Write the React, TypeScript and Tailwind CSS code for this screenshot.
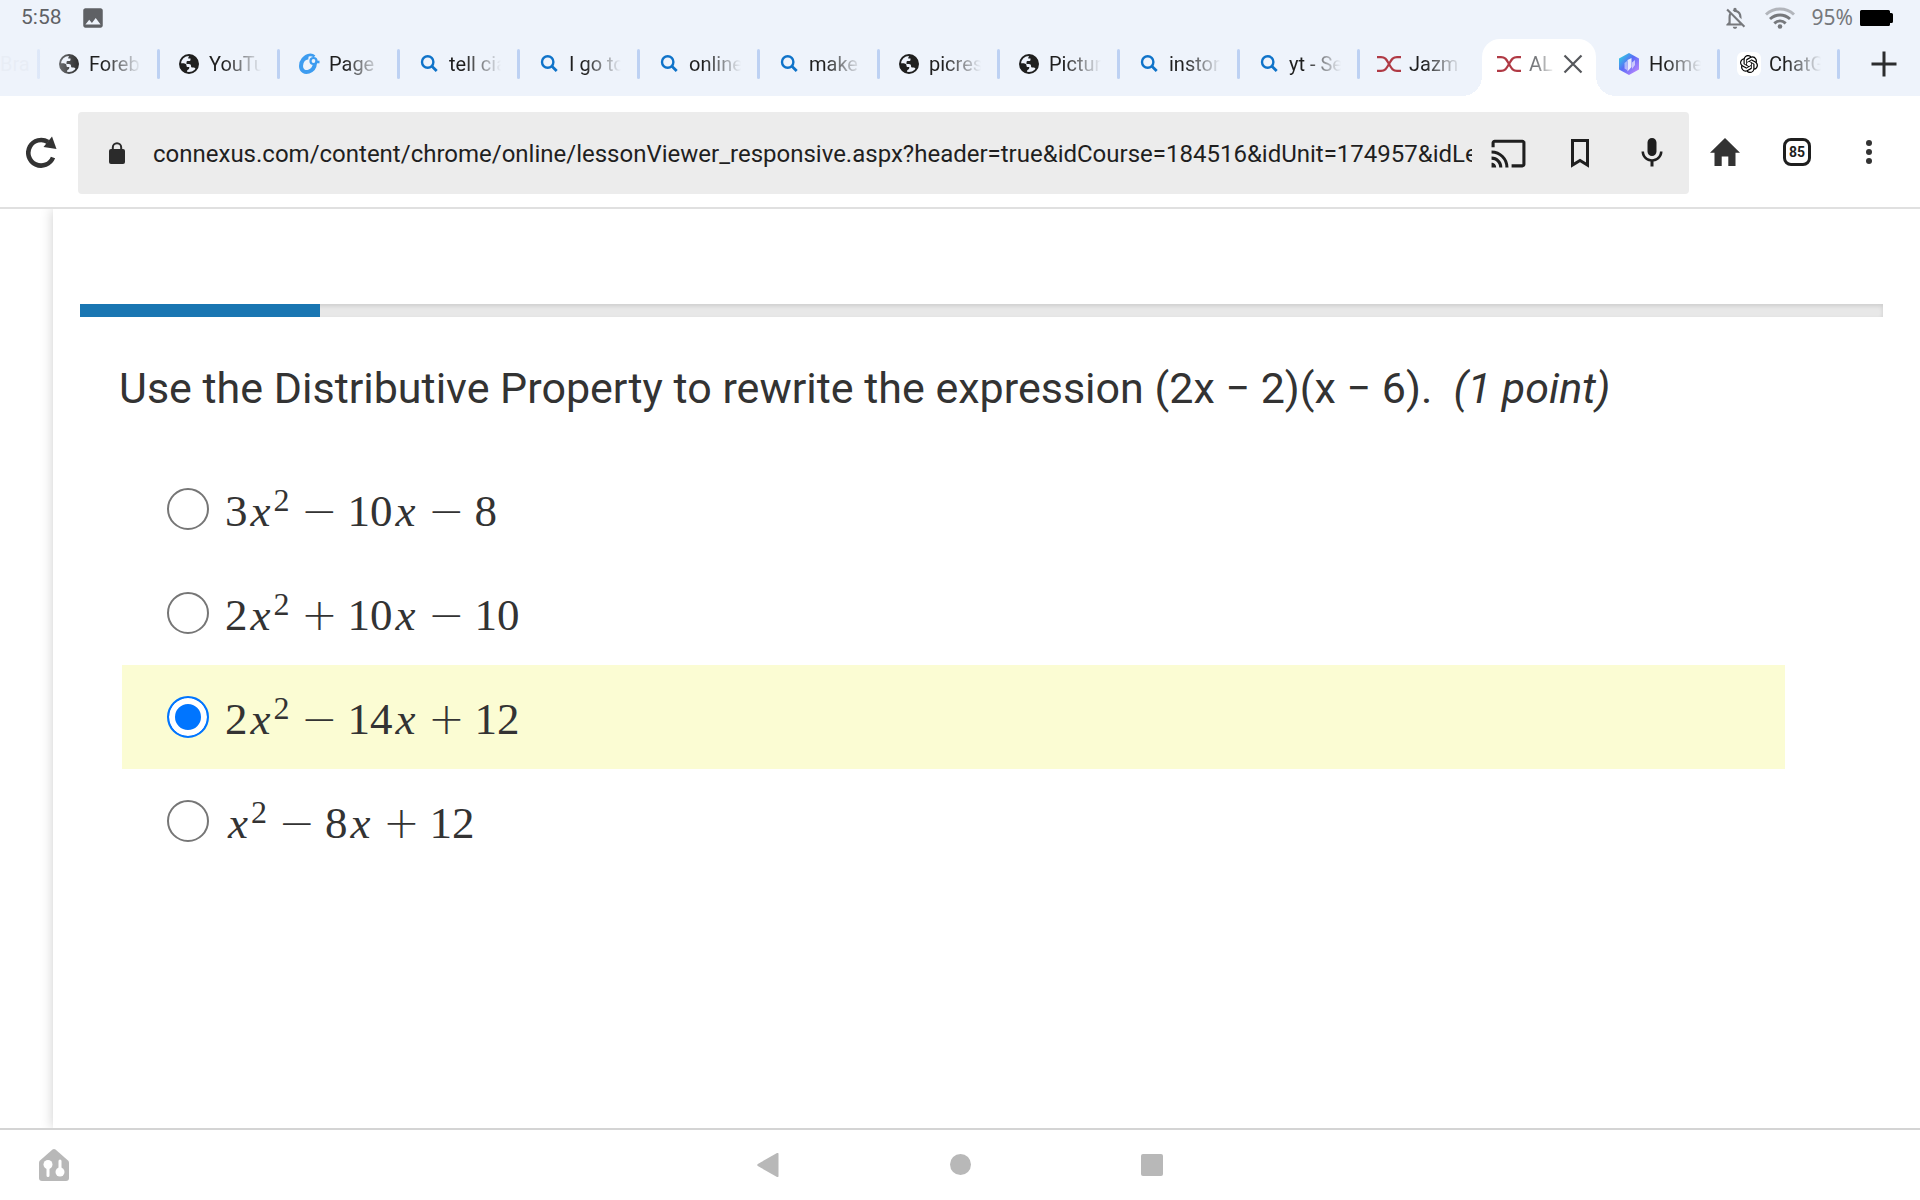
import React, { useState } from "react";
import {
  MdCast,
  MdImage,
  MdMic,
  MdOutlineNotificationsOff,
} from "react-icons/md";
import { SiOpenai } from "react-icons/si";

const GlobeIcon = () => (
  <svg viewBox="0 0 24 24" className="size-6 text-[#1f1f1f]" fill="none">
    <circle cx="12" cy="12" r="9" stroke="currentColor" strokeWidth="2" />
    <path
      fill="currentColor"
      d="M13.500 3c4 .6 7.500 4 7.500 8.500 0 2-.8 4-2 5.500-.8-1.200-2-1.300-3.300-1.400-1.200 0-1.700-.7-1.700-1.700 0-1.200-.8-1.900-2-1.900H9.500v-1.700c0-.8.500-1.300 1.300-1.300h1.400c.8 0 1.300-.5 1.300-1.300V6.500h-2.300C11.200 5 12 3.600 13.500 3z"
    />
    <path
      fill="currentColor"
      d="M3.200 11.500c1.800-.3 3.600-.3 5 .2 1 .4 1.300 1.100 1.300 2 0 .9.500 1.400 1.400 1.400h1.400c0 1.300-.3 2.200-1.300 2.600-.8.3-1.100 1-1.100 3.200-4-1-6.900-4.700-6.700-9.400z"
    />
  </svg>
);

const SearchIcon = () => (
  <svg viewBox="0 0 24 24" className="size-6" fill="none" stroke="#0f73c9">
    <circle cx="10.700" cy="10" r="5.700" strokeWidth="2.400" />
    <path d="M14.900 14.200l4.800 4.800" strokeWidth="2.800" />
  </svg>
);

const PageIcon = () => (
  <svg viewBox="0 0 24 24" className="size-6" fill="none" stroke="#3d9cf0">
    <path
      d="M11.500 5.500C7.500 5 4 9 4 14c0 5 4 6.800 7.800 5.600 3.700-1.200 6-4.600 6.200-8.600"
      strokeWidth="4"
    />
    <path d="M5.500 8C8 3 14 1.500 17.500 4.500" strokeWidth="2.600" />
    <circle cx="16.500" cy="9" r="3" strokeWidth="2.200" />
    <path d="M18.500 10h4" strokeWidth="2.600" />
  </svg>
);

const ConnexusIcon = () => (
  <svg viewBox="0 0 24 24" className="size-6" fill="none" stroke="#b03a45">
    <path d="M0 5.200h4c4.500 0 5.500 2.600 8 6.800 2.500 4.200 3.500 6.800 8 6.800h4" strokeWidth="2.200" />
    <path d="M0 18.800h4c4.500 0 5.500-2.600 8-6.800 2.500-4.200 3.500-6.800 8-6.800h4" strokeWidth="2.200" />
  </svg>
);

const HomeTabIcon = () => (
  <svg viewBox="0 0 24 24" className="size-6">
    <defs>
      <linearGradient id="hex" x1="0" y1="0" x2="1" y2="1">
        <stop offset="0" stopColor="#22e5dc" />
        <stop offset="0.450" stopColor="#5a6cf7" />
        <stop offset="1" stopColor="#d08bff" />
      </linearGradient>
    </defs>
    <path d="M12 1l10 5.500v11L12 23 2 17.500v-11z" fill="url(#hex)" />
    <path d="M7.500 11l2.500-2v9l-2.500-1.500z" fill="#fff" opacity="0.500" />
    <path d="M10.500 8l4-2v9l-4 4.500z" fill="#fff" opacity="0.850" />
    <path d="M15 10.500l3-2.500v5l-3 4z" fill="#fff" opacity="0.600" />
  </svg>
);

const ChatIcon = () => (
  <span className="flex size-6 items-center justify-center rounded-md bg-white text-black">
    <SiOpenai size={18} />
  </span>
);

const tabs = [
  { title: "Foreb", Icon: GlobeIcon },
  { title: "YouTu", Icon: GlobeIcon },
  { title: "Page", Icon: PageIcon },
  { title: "tell cia", Icon: SearchIcon },
  { title: "I go to", Icon: SearchIcon },
  { title: "online", Icon: SearchIcon },
  { title: "make", Icon: SearchIcon },
  { title: "picres", Icon: GlobeIcon },
  { title: "Pictur", Icon: GlobeIcon },
  { title: "instor", Icon: SearchIcon },
  { title: "yt - Se", Icon: SearchIcon },
  { title: "Jazm", Icon: ConnexusIcon },
  { title: "AL", Icon: ConnexusIcon, active: true },
  { title: "Home", Icon: HomeTabIcon, noLine: true },
  { title: "ChatG", Icon: ChatIcon },
];

const answers = [
  ["3", "x2", "−", "10", "x", "−", "8"],
  ["2", "x2", "+", "10", "x", "−", "10"],
  ["2", "x2", "−", "14", "x", "+", "12"],
  ["x2", "−", "8", "x", "+", "12"],
];

const MathText = ({ parts }: { parts: string[] }) => (
  <span className="flex items-baseline pt-[3px] font-['Liberation_Serif',serif] text-[45px] leading-[52px]">
    {parts.map((part, i) => {
      if (part === "+" || part === "−") {
        return (
          <span
            key={i}
            className="w-14 text-center font-['DejaVu_Sans',sans-serif] text-[44px] leading-[52px] font-extralight"
          >
            {part}
          </span>
        );
      }
      if (part[0] === "x") {
        return (
          <span key={i} className="flex items-baseline">
            <i className="w-[26px] text-center">x</i>
            {part[1] && (
              <sup className="top-0 mr-[2px] self-start text-[32px] leading-[30px]">
                {part[1]}
              </sup>
            )}
          </span>
        );
      }
      return <span key={i}>{part}</span>;
    })}
  </span>
);

const StatusBar = () => (
  <div className="flex h-9 items-center justify-between pr-[27px] pl-[21px]">
    <div className="flex items-center gap-[18px] text-[21px] text-[#5f6165]">
      <span>5:58</span>
      <MdImage size={26} />
    </div>
    <div className="flex items-center gap-[7px] text-[#76787c]">
      <div className="flex items-center gap-[17px]">
        <MdOutlineNotificationsOff size={26} />
        <svg viewBox="0 0 30 22" className="h-[22px] w-[30px]" fill="none" stroke="currentColor" strokeWidth="3">
          <path d="M1 7.500C9 .2 21 .2 29 7.500" opacity="0.500" />
          <path d="M5 12c6-5.300 14-5.300 20 0" />
          <path d="M9.300 16.300c3.400-3 8-3 11.400 0" />
          <circle cx="15" cy="19.500" r="2.300" fill="currentColor" stroke="none" />
        </svg>
        <span className="font-['Noto_Sans',sans-serif] text-[21px]">95%</span>
      </div>
      <svg viewBox="0 0 33 16" className="h-4 w-[33px]">
        <path d="M1.500 0h27q1.500 0 1.500 1.500V3h1.500Q33 3 33 4.500v7q0 1.500-1.500 1.500H30v1.500q0 1.500-1.500 1.500h-27Q0 16 0 14.500v-13Q0 0 1.500 0z" />
      </svg>
    </div>
  </div>
);

const TabStrip = () => (
  <div className="relative flex h-[60px] overflow-hidden pb-1">
    <div className="flex w-[37px] shrink-0 items-center text-xl text-[#dfe4ec]">Bra</div>
    {tabs.map(({ title, Icon, active, noLine }) => (
      <div key={title} className="relative flex w-[120px] shrink-0 items-center">
        {active && (
          <div className="absolute top-[3px] right-px -bottom-1 left-[5px] rounded-t-[18px] bg-white">
            <div className="absolute bottom-0 -left-5 size-5 bg-[radial-gradient(circle_at_top_left,transparent_20px,white_20px)]" />
            <div className="absolute -right-5 bottom-0 size-5 bg-[radial-gradient(circle_at_top_right,transparent_20px,white_20px)]" />
          </div>
        )}
        <span
          className={
            active || noLine ? "w-[3px]" : "h-[30px] w-[3px] rounded-xs bg-[#bdd1f3]"
          }
        />
        <button className="relative flex items-center gap-2 pl-[17px] text-xl text-[#1f1f1f]">
          <Icon />
          <span
            className={
              active
                ? "w-[26px] overflow-hidden text-left whitespace-nowrap text-[#77797c] mask-r-from-30% mask-r-to-100%"
                : "w-[52px] overflow-hidden text-left whitespace-nowrap mask-r-from-30% mask-r-to-100%"
            }
          >
            {title}
          </span>
        </button>
        {active && (
          <button aria-label="Close tab" className="relative ml-2">
            <svg viewBox="0 0 20 20" className="size-5" stroke="#55575b" strokeWidth="2.200">
              <path d="M1.500 1.500l17 17M18.500 1.500l-17 17" />
            </svg>
          </button>
        )}
      </div>
    ))}
    <span className="h-[30px] w-[3px] shrink-0 self-center rounded-xs bg-[#bdd1f3]" />
    <button aria-label="New tab" className="flex grow items-center justify-center pl-2">
      <svg viewBox="0 0 26 26" className="size-[26px]" stroke="#2b2c2e" strokeWidth="3">
        <path d="M13 .5v25M.5 13h25" />
      </svg>
    </button>
    <div className="pointer-events-none absolute inset-y-0 left-0 w-9 bg-[#eef3fb]/60" />
    <div className="pointer-events-none absolute inset-y-0 left-9 w-12 bg-linear-to-r from-[#eef3fb]/70 to-transparent" />
  </div>
);

const Toolbar = () => (
  <div className="flex items-center border-b-2 border-[#e0e0e0] bg-white pt-4 pr-[15px] pb-[13px] text-[#1f1f1f]">
    <button aria-label="Reload" className="flex w-[78px] justify-center pb-[2px] pl-[6px]">
      <svg viewBox="0 0 32 32" className="size-8" fill="none">
        <path d="M27 21.500A12.800 12.800 0 1 1 22 6" stroke="#333" strokeWidth="4.600" />
        <path d="M26 .5L30.500 13 17.500 11z" fill="#333" />
      </svg>
    </button>
    <div className="flex h-[82px] min-w-0 grow items-center rounded-sm bg-[#ececec] pr-px pl-[31px]">
      <svg viewBox="0 0 16 22" className="mr-7 h-[22px] w-4 shrink-0" fill="none">
        <path d="M3.800 9V5.500a4.200 4.200 0 0 1 8.400 0V9" stroke="#2b2b2b" strokeWidth="2" />
        <rect y="7" width="16" height="15" rx="2" fill="#2b2b2b" />
      </svg>
      <input
        aria-label="Address"
        className="min-w-0 grow bg-transparent pt-[2px] text-2xl outline-none"
        defaultValue="connexus.com/content/chrome/online/lessonViewer_responsive.aspx?header=true&idCourse=184516&idUnit=174957&idLesson="
      />
      <button aria-label="Cast" className="flex w-[72px] shrink-0 justify-center">
        <MdCast size={37} />
      </button>
      <button aria-label="Bookmark" className="flex w-[72px] shrink-0 justify-center">
        <svg viewBox="0 0 18 29" className="h-[29px] w-[18px]" fill="none" stroke="currentColor" strokeWidth="3">
          <path d="M1.500 1.500h15v24.500L9 21.500 1.500 26z" />
        </svg>
      </button>
      <button aria-label="Voice search" className="flex w-[72px] shrink-0 justify-center">
        <MdMic size={36} />
      </button>
    </div>
    <button aria-label="Home" className="flex w-[72px] justify-center pb-[2px]">
      <svg viewBox="0 0 30 28" className="h-7 w-[30px]" fill="#333">
        <path d="M15 0l15 14.800h-4.500V28h-7.200v-9.500h-6.600V28H4.500V14.800H0z" />
      </svg>
    </button>
    <button aria-label="Open tabs" className="flex w-[72px] justify-center pb-[2px]">
      <span className="flex size-7 items-center justify-center rounded-lg border-3 border-[#1f1f1f] text-sm font-bold">
        85
      </span>
    </button>
    <button aria-label="Menu" className="flex w-[72px] flex-col items-center gap-[3px] pb-[2px]">
      <span className="size-[6px] rounded-full bg-[#333]" />
      <span className="size-[6px] rounded-full bg-[#333]" />
      <span className="size-[6px] rounded-full bg-[#333]" />
    </button>
  </div>
);

const Question = () => {
  const [selected, setSelected] = useState(2);

  return (
    <main className="flex grow overflow-hidden pl-[53px]">
      <div className="grow bg-white pt-[95px] pr-[37px] pl-[27px] text-[#333] shadow-[0_0_12px_rgba(0,0,0,0.2)]">
        <div className="h-[13px] bg-[#e8e8e8] shadow-[inset_0_2px_4px_rgba(0,0,0,0.12)]">
          <div className="h-full w-[13.3%] bg-[#1976b2]" />
        </div>
        <h1 className="mt-[46px] pl-[39px] text-[43px] leading-[50px]">
          Use the Distributive Property to rewrite the expression (2x − 2)(x − 6).&nbsp;{" "}
          <i>(1 point)</i>
        </h1>
        <div className="mt-11 mr-[98px] ml-[42px]">
          {answers.map((parts, i) => (
            <label
              key={i}
              className={
                i === selected
                  ? "flex h-[104px] items-center gap-4 bg-[#fbfcd3] pl-[45px]"
                  : "flex h-[104px] items-center gap-4 pl-[45px]"
              }
            >
              <input
                type="radio"
                name="answer"
                checked={i === selected}
                onChange={() => setSelected(i)}
                className="size-[42px] appearance-none rounded-full border-2 border-[#767676] bg-white checked:border-[#0075ff] checked:bg-[#0075ff] checked:shadow-[inset_0_0_0_6px_white]"
              />
              <MathText parts={parts} />
            </label>
          ))}
        </div>
      </div>
    </main>
  );
};

const NavBar = () => (
  <div className="grid h-[72px] grid-cols-[1fr_auto_1fr] items-center border-t-2 border-[#d4d4d4] bg-white pb-px text-[#b8b8b8]">
    <button aria-label="Smart home" className="ml-[39px] w-[30px]">
      <svg viewBox="0 0 30 32" className="h-8 w-[30px]">
        <path d="M13.500.6q1.500-1.200 3 0L29 11.500q1 1 1 2V29q0 3-3 3H3q-3 0-3-3V13.500q0-1 1-2z" fill="currentColor" />
        <circle cx="9" cy="15.500" r="4.500" fill="#fff" />
        <circle cx="21" cy="23" r="4.500" fill="#fff" />
        <path d="M9 16v10.500M21 12v10" stroke="#fff" strokeWidth="3" strokeLinecap="round" />
      </svg>
    </button>
    <div className="flex items-center">
      <button aria-label="Back" className="flex w-48 justify-center">
        <svg viewBox="0 0 22 24" className="h-6 w-[22px]" fill="currentColor">
          <path d="M.8 11q-1.200 1 0 2L20 24q1.500.4 1.500-1V1q0-1.400-1.500-1z" />
        </svg>
      </button>
      <button aria-label="Home screen" className="flex w-48 justify-center">
        <span className="size-[21px] rounded-full bg-current" />
      </button>
      <button aria-label="Recent apps" className="flex w-48 justify-center">
        <span className="size-[22px] rounded-xs bg-current" />
      </button>
    </div>
  </div>
);

const App = () => {
  return (
    <div className="flex min-h-screen flex-col bg-white font-['Roboto',sans-serif]">
      <header className="bg-[#eef3fb]">
        <StatusBar />
        <TabStrip />
        <Toolbar />
      </header>
      <Question />
      <NavBar />
    </div>
  );
};

export default App;
